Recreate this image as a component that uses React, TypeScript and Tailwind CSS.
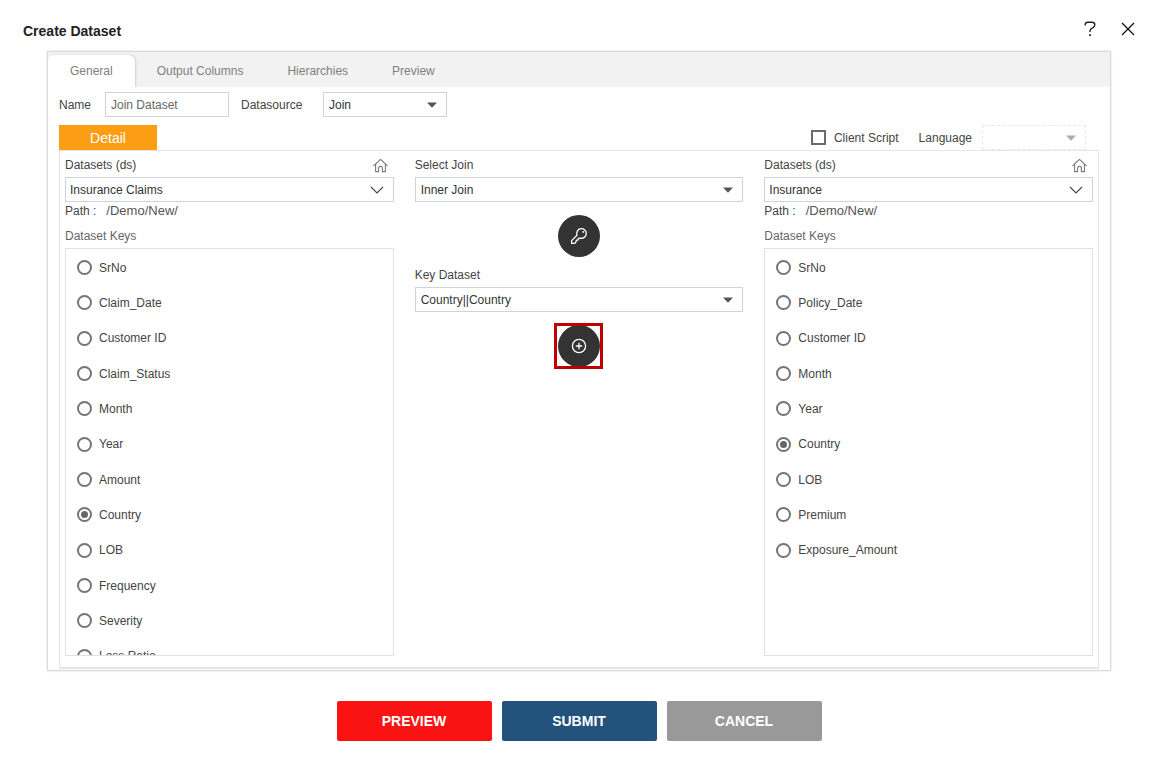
import React, { useState } from "react";

const TABS = ["General", "Output Columns", "Hierarchies", "Preview"];

const CLAIM_KEYS = [
    "SrNo", "Claim_Date", "Customer ID", "Claim_Status", "Month", "Year",
    "Amount", "Country", "LOB", "Frequency", "Severity", "Loss Ratio",
];

const INSURANCE_KEYS = [
    "SrNo", "Policy_Date", "Customer ID", "Month", "Year",
    "Country", "LOB", "Premium", "Exposure_Amount",
];

const HomeIcon = () => (
    <svg width="15" height="15" viewBox="0 0 15 15" fill="none" stroke="#7a7a7a" strokeWidth="1.1" strokeLinejoin="round" strokeLinecap="round">
        <path d="M0.8 7.6 L7.5 1.3 L14.2 7.6" />
        <path d="M2.6 6.2 V13.6 H5.6 V9.8 Q5.6 8.4 7.5 8.4 Q9.4 8.4 9.4 9.8 V13.6 H12.4 V6.2" />
    </svg>
);

const KeyIcon = () => (
    <svg width="18" height="18" viewBox="0 0 18 18" fill="none" stroke="#fff" strokeWidth="1.3" strokeLinejoin="round">
        <path d="M7 8.2 A4.8 4.8 0 1 1 10.2 11.1 L8.4 11.3 L8 13 L6.4 13.2 L5.9 15 L4.8 16.4 H1.6 V13.6 Z" />
        <circle cx="13.2" cy="4.9" r="0.9" fill="#fff" stroke="none" />
    </svg>
);

const PlusIcon = () => (
    <svg width="16" height="16" viewBox="0 0 16 16" fill="none" stroke="#fff" strokeWidth="1.3">
        <circle cx="8" cy="8" r="6.6" />
        <path d="M8 4.8 V11.2 M4.8 8 H11.2" />
    </svg>
);

const Caret = ({ className = "text-[#555]" }: { className?: string }) => (
    <svg width="10" height="6" viewBox="0 0 10 6" className={className}>
        <path d="M0 0.5 H10 L5 5.8 Z" fill="currentColor" />
    </svg>
);

const Chevron = () => (
    <svg width="14" height="8" viewBox="0 0 14 8" fill="none" stroke="#444" strokeWidth="1.1">
        <path d="M1 1 L7 7 L13 1" />
    </svg>
);

type SelectProps = {
    id: string;
    options: string[];
    icon?: React.ReactNode;
    className?: string;
    disabled?: boolean;
};

const Select: React.FC<SelectProps> = ({ id, options, icon = <Caret />, className = "border border-[#cdd3e1] pl-[5px]", disabled }) => (
    <div className="relative w-full">
        <select id={id} disabled={disabled} className={`block h-[25px] w-full appearance-none bg-white pr-7 text-[#333] ${className}`}>
            {options.map(o => <option key={o}>{o}</option>)}
        </select>
        <span className="pointer-events-none absolute inset-y-0 right-[10px] flex items-center">{icon}</span>
    </div>
);

type DatasetColumnProps = {
    id: string;
    dataset: string;
    keys: string[];
    initial: string;
};

const DatasetColumn: React.FC<DatasetColumnProps> = ({ id, dataset, keys, initial }) => {
    const [selected, setSelected] = useState(initial);

    return (
        <div className="min-w-0">
            <div className="flex h-[26px] items-center justify-between pt-[2px] pr-[6px]">
                <label htmlFor={`${id}-dataset`}>Datasets (ds)</label>
                <button type="button" aria-label="Home"><HomeIcon /></button>
            </div>
            <Select id={`${id}-dataset`} options={[dataset]} icon={<Chevron />} className="border border-[#cdd3e1] pl-1" />
            <div className="flex h-[18px] items-center">
                <span>Path :</span>
                <span className="ml-[10px] text-[13px] text-[#555]">/Demo/New/</span>
            </div>
            <fieldset>
                <legend className="flex h-7 items-center pt-1 text-[#666]">Dataset Keys</legend>
                <div className="h-[408px] overflow-y-auto border border-[#e0e0e0] pl-[11px] pt-px [scrollbar-width:none]">
                    <ul className="grid h-[424px] grid-rows-12">
                        {keys.map(k => (
                            <li key={k} className="flex items-center">
                                <label className="flex items-center gap-[7px]">
                                    <input
                                        type="radio"
                                        name={id}
                                        checked={selected === k}
                                        onChange={() => setSelected(k)}
                                        className="grid size-[15px] appearance-none place-content-center rounded-full border-2 border-[#757575] bg-white before:size-[7px] before:rounded-full checked:before:bg-[#666]"
                                    />
                                    {k}
                                </label>
                            </li>
                        ))}
                    </ul>
                </div>
            </fieldset>
        </div>
    );
};

const App: React.FC = () => {
    const [tab, setTab] = useState("General");
    const [name, setName] = useState("Join Dataset");

    return (
        <main className="min-h-screen bg-white pb-5 font-['Liberation_Sans',Arial,sans-serif] text-[12px] leading-4 text-[#444]">
            <header className="flex h-[51px] items-center justify-between pl-[23px] pr-4 pt-[7px]">
                <h1 className="pt-1 text-[14px] font-bold text-[#222]">Create Dataset</h1>
                <div className="flex items-center gap-6">
                    <button type="button" aria-label="Help">
                        <svg width="14" height="16" viewBox="0 0 14 16" fill="none" stroke="#222" strokeWidth="1.4">
                            <path d="M2.2 4.6 V3.6 Q2.2 1.2 4.8 1.2 H9 Q11.8 1.2 11.8 3.8 Q11.8 5.4 10 6.6 Q7 8.2 7 9.8 V11" />
                            <path d="M7 13.2 V15" strokeWidth="1.8" />
                        </svg>
                    </button>
                    <button type="button" aria-label="Close">
                        <svg width="14" height="14" viewBox="0 0 14 14" fill="none" stroke="#111" strokeWidth="1.3">
                            <path d="M1 1 L13 13 M13 1 L1 13" />
                        </svg>
                    </button>
                </div>
            </header>

            <div className="pl-[47px] pr-10">
                <section className="border border-[#d9d9d9] pb-px shadow-[0_0_2px_#ddd]">
                    <nav className="flex h-[35px] items-end bg-[#f2f2f2]">
                        {TABS.map(t => (
                            <button
                                key={t}
                                type="button"
                                onClick={() => setTab(t)}
                                className={`h-8 px-[22px] text-[#808080] ${tab === t ? "rounded-t-md bg-white shadow-[1px_0_2px_#ccc]" : ""}`}
                            >
                                {t}
                            </button>
                        ))}
                    </nav>

                    <div className="relative bg-white pl-[11px] pr-[11px] pt-[5px]">
                        <div className="flex items-center">
                            <label htmlFor="name" className="w-[46px]">Name</label>
                            <input
                                id="name"
                                value={name}
                                onChange={e => setName(e.target.value)}
                                className="h-[25px] w-[124px] border border-[#cdd3e1] px-[5px] text-[#666]"
                            />
                            <label htmlFor="datasource" className="ml-3 w-[82px]">Datasource</label>
                            <div className="w-[124px]"><Select id="datasource" options={["Join"]} /></div>
                        </div>

                        <div className="mt-2 flex items-center justify-between">
                            <button type="button" className="h-[25px] w-[98px] bg-[#fb9e14] text-[14px] text-white">Detail</button>
                            <div className="flex items-center pr-[13px]">
                                <label className="flex items-center gap-2">
                                    <input type="checkbox" className="size-[15px] appearance-none border-2 border-[#6b6b6b] bg-white checked:bg-[#6b6b6b]" />
                                    Client Script
                                </label>
                                <label htmlFor="language" className="ml-5">Language</label>
                                <div className="ml-[10px] w-[104px]">
                                    <Select id="language" disabled options={[""]} icon={<Caret className="text-[#aaa]" />} className="border border-dashed border-[#e8e8e8] pl-[5px]" />
                                </div>
                            </div>
                        </div>

                        <div className="grid grid-cols-3 gap-[21px] border border-b-2 border-[#e6e6e6] pb-[11px] pl-[5px] pr-[5px]">
                            <DatasetColumn id="left" dataset="Insurance Claims" keys={CLAIM_KEYS} initial="Country" />

                            <div className="flex min-w-0 flex-col items-center">
                                <label htmlFor="join" className="flex h-[26px] w-full items-center pt-[2px]">Select Join</label>
                                <Select id="join" options={["Inner Join"]} />
                                <button type="button" aria-label="Add key" className="mt-[13px] flex size-[42px] items-center justify-center rounded-full bg-[#333]">
                                    <KeyIcon />
                                </button>
                                <label htmlFor="key-dataset" className="mt-1 flex h-[26px] w-full items-center pt-[2px]">Key Dataset</label>
                                <Select id="key-dataset" options={["Country||Country"]} />
                                <div className="mt-[11px] flex h-[46px] w-[49px] items-center justify-center overflow-hidden border-3 border-[#c00000]">
                                    <button type="button" aria-label="Add join" className="flex size-[42px] shrink-0 items-center justify-center rounded-full bg-[#333]">
                                        <PlusIcon />
                                    </button>
                                </div>
                            </div>

                            <DatasetColumn id="right" dataset="Insurance" keys={INSURANCE_KEYS} initial="Country" />
                        </div>
                    </div>
                </section>

                <footer className="mt-[30px] flex justify-center gap-[10px] text-[14px] font-bold text-white">
                    <button type="button" className="h-10 w-[155px] rounded-xs bg-[#fb1313]">PREVIEW</button>
                    <button type="button" className="h-10 w-[155px] rounded-xs bg-[#23527c]">SUBMIT</button>
                    <button type="button" className="h-10 w-[155px] rounded-xs bg-[#999]">CANCEL</button>
                </footer>
            </div>
        </main>
    );
};

export default App;
